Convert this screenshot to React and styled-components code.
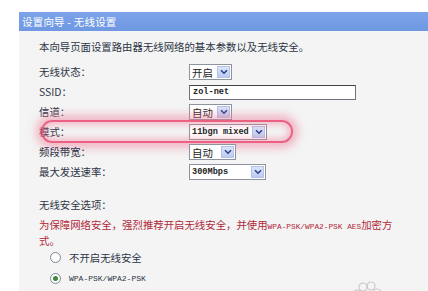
import React from "react";
import styled, { createGlobalStyle } from "styled-components";

const Global = createGlobalStyle`
  html, body { margin: 0; padding: 0; background: #fff; }
  body { font-family: "Noto Sans CJK SC", "Liberation Sans", sans-serif; }
`;

const Page = styled.div`
  width: 428px;
  height: 291px;
  overflow: hidden;
  padding: 12px 0 0 19px;
  box-sizing: border-box;
  background: #fff;
`;

const Panel = styled.div`
  display: flex;
  flex-direction: column;
  height: 100%;
`;

const Header = styled.div`
  height: 19px;
  background: linear-gradient(#7ba4ea, #6f98e2);
  color: #fff;
  font-size: 10.5px;
  line-height: 19px;
  padding-left: 3px;
  letter-spacing: 0.2px;
`;

const Body = styled.div`
  flex: 1;
  background: #f4f4f4;
  padding: 9px 0 0 20px;
  color: #2d3446;
  font-size: 10.4px;
  position: relative;
`;

const Intro = styled.div`
  line-height: 14px;
  height: 14px;
  margin-bottom: 8px;
`;

const Form = styled.div`
  display: flex;
  flex-direction: column;
`;

const Row = styled.div`
  display: grid;
  grid-template-columns: 150px 1fr;
  align-items: center;
  height: 20px;
  position: relative;
`;

const Label = styled.span`
  line-height: 14px;
`;

const SelectBox = styled.div`
  width: ${(p) => p.$w}px;
  height: 16px;
  box-sizing: border-box;
  border: 1px solid #8d94a0;
  background: #fff;
  display: flex;
  align-items: center;
  justify-content: space-between;
  padding-left: 2px;
  padding-right: 1px;
`;

const SelText = styled.span`
  font-family: ${(p) => (p.$mono ? '"Liberation Mono", monospace' : 'inherit')};
  font-size: ${(p) => (p.$mono ? "8.6px" : "10.4px")};
  font-weight: ${(p) => (p.$mono ? 700 : 400)};
  color: #222;
  line-height: 13px;
`;

const Arrow = styled.span`
  width: 13px;
  height: 12px;
  background: linear-gradient(#dbe4f9, #bccbf0);
  border: 1px solid #b3c2e6;
  box-sizing: border-box;
  display: flex;
  align-items: center;
  justify-content: center;
`;

const InputBox = styled.div`
  width: 167px;
  height: 15px;
  box-sizing: border-box;
  border: 1px solid #6f747c;
  border-top-color: #444;
  background: #fff;
  padding-left: 3px;
  display: flex;
  align-items: center;
`;

const Glow = styled.div`
  position: absolute;
  left: 2px;
  top: -2px;
  width: 252px;
  height: 23px;
  border: 2px solid rgba(232, 70, 110, 0.85);
  border-radius: 11px;
  box-shadow: 0 0 8px 5px rgba(240, 120, 150, 0.5), inset 0 0 6px 3px rgba(240, 120, 150, 0.45);
  pointer-events: none;
  box-sizing: border-box;
`;

const Section = styled.div`
  margin-top: 16px;
  line-height: 14px;
`;

const Warning = styled.div`
  margin-top: 5px;
  color: #b0283a;
`;

const WarnLine = styled.div`
  height: 16px;
  line-height: 16px;
  white-space: nowrap;
`;

const Mono = styled.span`
  font-family: "Liberation Mono", monospace;
  font-size: ${(p) => p.$size || 8}px;
`;

const Radios = styled.div`
  display: flex;
  flex-direction: column;
  margin-top: -2px;
`;

const RadioRow = styled.div`
  display: flex;
  align-items: center;
  height: 21px;
  padding-left: 11px;
  gap: 8px;
`;

const Circle = styled.span`
  width: 11px;
  height: 11px;
  border-radius: 50%;
  border: 1px solid #7d8594;
  box-sizing: border-box;
  background: #fff;
  display: flex;
  align-items: center;
  justify-content: center;
  &::after {
    content: "";
    width: 5px;
    height: 5px;
    border-radius: 50%;
    background: ${(p) => (p.$on ? "#3a8a3a" : "transparent")};
  }
`;

const Watermark = styled.svg`
  position: absolute;
  left: 328px;
  top: 248px;
`;

const Chevron = () => (
  <svg width="8" height="6" viewBox="0 0 8 6">
    <path d="M1 1.2 L4 4.2 L7 1.2" fill="none" stroke="#2b3f8c" strokeWidth="1.6" />
  </svg>
);

const Select = ({ w, text, mono }) => (
  <SelectBox $w={w}>
    <SelText $mono={mono}>{text}</SelText>
    <Arrow>
      <Chevron />
    </Arrow>
  </SelectBox>
);

export default function App() {
  return (
    <>
      <Global />
      <Page>
        <Panel>
          <Header>设置向导 - 无线设置</Header>
          <Body>
            <Intro>本向导页面设置路由器无线网络的基本参数以及无线安全。</Intro>
            <Form>
              <Row>
                <Label>无线状态：</Label>
                <Select w={43} text="开启" />
              </Row>
              <Row>
                <Label>SSID：</Label>
                <InputBox>
                  <SelText $mono>zol-net</SelText>
                </InputBox>
              </Row>
              <Row>
                <Label>信道：</Label>
                <Select w={43} text="自动" />
              </Row>
              <Row>
                <Glow />
                <Label>模式：</Label>
                <Select w={78} text="11bgn mixed" mono />
              </Row>
              <Row>
                <Label>频段带宽：</Label>
                <Select w={47} text="自动" />
              </Row>
              <Row>
                <Label>最大发送速率：</Label>
                <Select w={77} text="300Mbps" mono />
              </Row>
            </Form>
            <Section>无线安全选项：</Section>
            <Warning>
              <WarnLine>
                为保障网络安全，强烈推荐开启无线安全，并使用<Mono $size={7.8}>WPA-PSK/WPA2-PSK AES</Mono>加密方
              </WarnLine>
              <WarnLine>式。</WarnLine>
            </Warning>
            <Radios>
              <RadioRow>
                <Circle />
                <span>不开启无线安全</span>
              </RadioRow>
              <RadioRow>
                <Circle $on />
                <Mono $size={8}>WPA-PSK/WPA2-PSK</Mono>
              </RadioRow>
            </Radios>
            <Watermark width="40" height="20" viewBox="0 0 40 20">
              <g fill="none" stroke="#c8c8c8" strokeWidth="1.2">
                <circle cx="16" cy="8" r="4" />
                <circle cx="24" cy="7" r="4" />
                <circle cx="10" cy="15" r="4" />
                <circle cx="30" cy="14" r="4" />
                <circle cx="20" cy="18" r="5" />
              </g>
            </Watermark>
          </Body>
        </Panel>
      </Page>
    </>
  );
}
